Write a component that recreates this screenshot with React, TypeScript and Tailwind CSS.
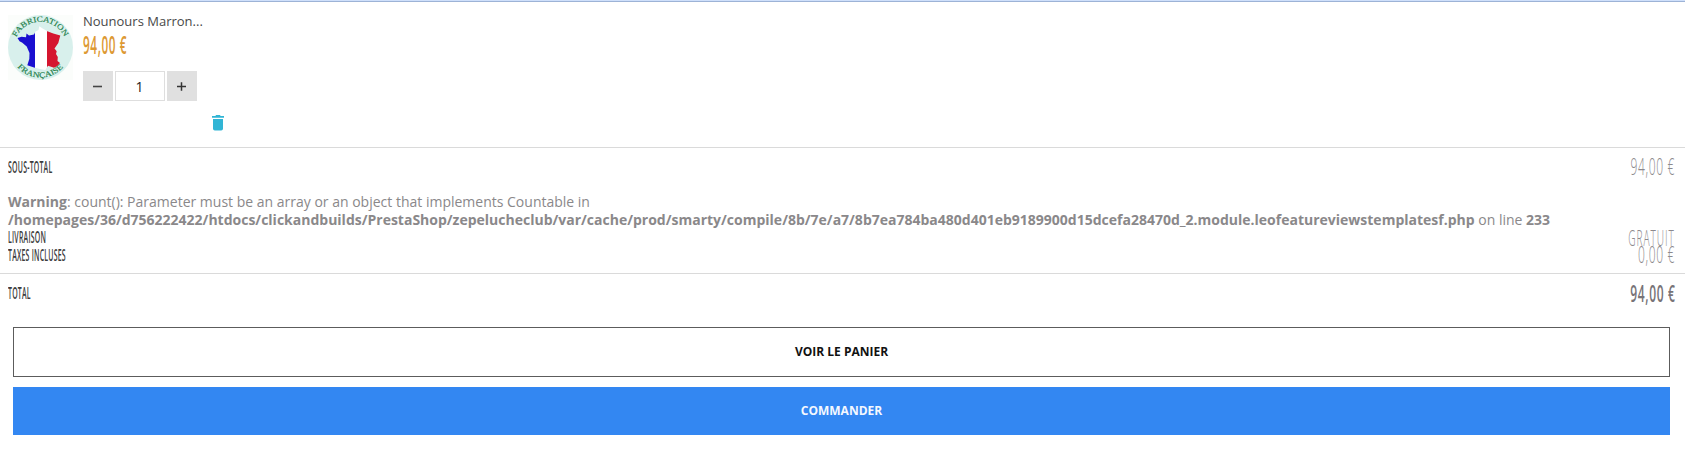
import React from "react";

function OriginBadge() {
  return (
    <svg width="65" height="65" viewBox="0 0 65 65" className="block shrink-0">
      <defs>
        <path id="arc-top" d="M8.3 22.5 A26.4 26.4 0 0 1 56.7 22.5" />
        <path id="arc-bottom" d="M9 51.5 A30.5 30.5 0 0 0 56 51.5" />
        <clipPath id="france">
          <path d="M31.3 11.3 L34.7 13.5 L39.3 16.3 L45.3 18.5 L52.3 20.5 L50.3 28 L46.5 33.5 L48.7 36.3 L48 39 L49.8 42 L49.5 46 L52 48 L49.5 51 L46 52.7 L40 50.8 L37.3 55 L32 54 L26 52.5 L19.3 50.3 L21.3 44 L21.5 38 L18.7 31.5 L14 27.5 L11.5 26.3 L9.5 23 L13.5 21.7 L18 22.2 L18.5 18.5 L21 20.5 L26 19.5 L27.5 16.5 L30.5 15 Z" />
        </clipPath>
      </defs>
      <rect width="65" height="65" fill="#fbfdfb" />
      <circle cx="32.5" cy="32.5" r="32.5" fill="#d8f0ec" />
      <g clipPath="url(#france)">
        <rect x="0" y="0" width="27" height="65" fill="#1a0fd0" />
        <rect x="27" y="0" width="12" height="65" fill="#ffffff" />
        <rect x="39" y="0" width="26" height="65" fill="#d5152f" />
      </g>
      <g fill="#22804a" fontFamily="Liberation Serif, serif" fontSize="7.8" stroke="#22804a" strokeWidth="0.15">
        <text>
          <textPath href="#arc-top" startOffset="0.3" textLength="60" lengthAdjust="spacingAndGlyphs">FABRICATION</textPath>
        </text>
        <text>
          <textPath href="#arc-bottom" startOffset="0.5" textLength="52" lengthAdjust="spacingAndGlyphs">FRANÇAISE</textPath>
        </text>
      </g>
    </svg>
  );
}

function Label({ children }: { children: string }) {
  return (
    <span className="block h-[18px] w-20 origin-left scale-x-[0.435] whitespace-nowrap text-[16px] leading-[18px] font-semibold tracking-[0.5px] text-[#3c3c3c]">
      {children}
    </span>
  );
}

function Amount({ children, strong = false }: { children: string; strong?: boolean }) {
  return (
    <span
      className={
        strong
          ? "block origin-right scale-x-[0.5] whitespace-nowrap text-[24px] leading-[18px] font-semibold tracking-[1.3px] text-[#777377]"
          : "-mt-[2px] block origin-right scale-x-[0.5] whitespace-nowrap text-[24px] leading-[18px] font-light tracking-[1.3px] text-[#8c898c]"
      }
    >
      {children}
    </span>
  );
}

function Row({ label, value, strong }: { label: string; value: React.ReactNode; strong?: boolean }) {
  return (
    <div className="flex h-[18px] items-center justify-between">
      <Label>{label}</Label>
      {typeof value === "string" ? <Amount strong={strong}>{value}</Amount> : value}
    </div>
  );
}

export default function App() {
  return (
    <div className="h-[459px] w-[1685px] overflow-hidden bg-white font-['Open_Sans',sans-serif]">
      <div className="h-[2px] border-b border-[#9db3d6] bg-[#cfe0fb]" />
      <section className="flex h-[146px] border-b border-[#dadada] pt-[13px] pl-2">
        <OriginBadge />
        <div className="flex w-[151px] flex-col pl-[10px]">
          <div className="-mt-px h-[14px] text-[13px] leading-[14px] whitespace-nowrap text-[#484848]">Nounours Marron...</div>
          <div className="mt-[6px] h-[20px] origin-left scale-x-[0.47] text-[25px] leading-[20px] font-semibold tracking-[1.3px] whitespace-nowrap text-[#dd9933]">
            94,00 €
          </div>
          <div className="mt-[17px] flex h-[30px] gap-[2px]">
            <button className="flex w-[30px] items-center justify-center bg-[#e0e0e0]">
              <svg width="10" height="10" viewBox="0 0 10 10"><path d="M0 5.5h9" stroke="#444" strokeWidth="1.6" /></svg>
            </button>
            <div className="flex w-[50px] items-center justify-center border border-[#dedede] pr-px text-[14px] text-[#222]">1</div>
            <button className="flex w-[30px] items-center justify-center bg-[#e0e0e0]">
              <svg width="10" height="10" viewBox="0 0 10 10"><path d="M0 5.5h9M4.5 1.2v8.6" stroke="#333" strokeWidth="1.5" /></svg>
            </button>
          </div>
          <svg width="12" height="16" viewBox="0 0 12 16" className="mt-[14px] self-end" fill="#31b5d5">
            <path d="M0 1h3.3l.8-1h3.8l.8 1H12v1.7H0zM1 4h10v9.8a1.8 1.8 0 0 1-1.8 1.7H2.8A1.8 1.8 0 0 1 1 13.8z" />
          </svg>
        </div>
      </section>
      <section className="flex h-[126px] flex-col border-b border-[#dadada] pt-[10px] pr-[10px] pl-2">
        <Row label="SOUS-TOTAL" value="94,00 €" />
        <p className="mt-[17px] text-[14px] leading-[18px] whitespace-nowrap text-[#8a888a]">
          <b>Warning</b>: count(): Parameter must be an array or an object that implements Countable in
          <br />
          <b>/homepages/36/d756222422/htdocs/clickandbuilds/PrestaShop/zepelucheclub/var/cache/prod/smarty/compile/8b/7e/a7/8b7ea784ba480d401eb9189900d15dcefa28470d_2.module.leofeatureviewstemplatesf.php</b>{" "}
          on line <b>233</b>
        </p>
        <div className="-mt-px">
          <Row
            label="LIVRAISON"
            value={
              <span className="block origin-right scale-x-[0.46] text-[22px] leading-[18px] font-light tracking-[2px] whitespace-nowrap text-[#8c898c]">
                GRATUIT
              </span>
            }
          />
          <Row label="TAXES INCLUSES" value="0,00 €" />
        </div>
      </section>
      <section className="pt-[10px] pr-[10px] pl-2">
        <Row label="TOTAL" value="94,00 €" strong />
      </section>
      <div className="mt-[25px] mr-[15px] ml-[13px] flex flex-col gap-[10px]">
        <button className="h-[50px] border border-[#5c5c5c] text-[12px] font-bold text-[#111]">VOIR LE PANIER</button>
        <button className="h-[48px] bg-[#3387f2] text-[12px] font-bold text-[#f4f8ff]">COMMANDER</button>
      </div>
    </div>
  );
}
